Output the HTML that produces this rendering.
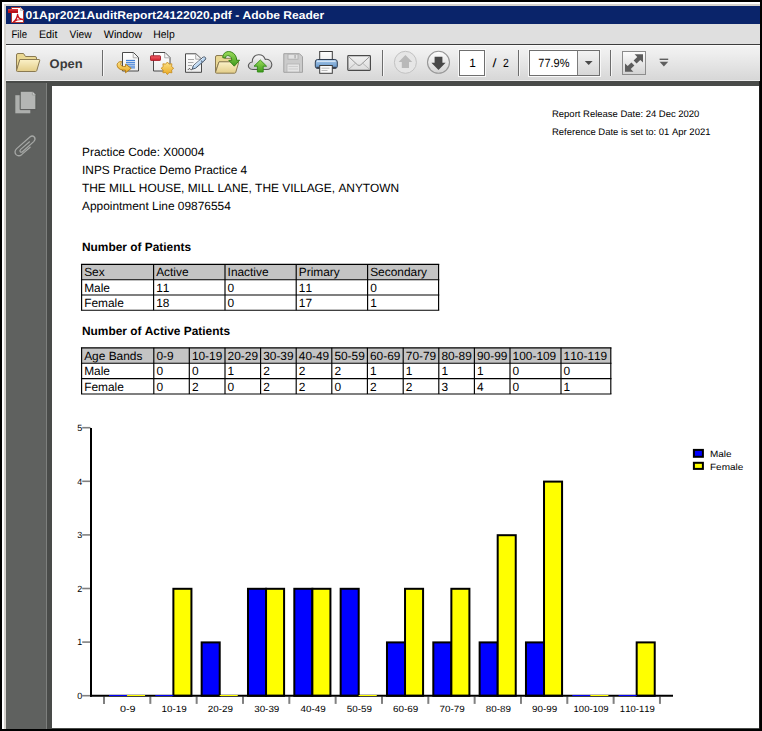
<!DOCTYPE html>
<html>
<head>
<meta charset="utf-8">
<title>01Apr2021AuditReport24122020.pdf - Adobe Reader</title>
<style>
html,body{margin:0;padding:0;}
body{text-rendering:geometricPrecision;font-kerning:none;width:762px;height:731px;background:#000;position:relative;overflow:hidden;font-family:"Liberation Sans",sans-serif;color:#000;}
.abs{position:absolute;}
#frame{left:2px;top:2px;width:758px;height:727px;background:#d6d3ce;}
#frame-hi{left:2px;top:2px;width:758px;height:2px;background:#fff;}
#frame-hil{left:2px;top:2px;width:2px;height:727px;background:#fff;}
#title{left:6px;top:6px;width:754px;height:18px;background:#0a246a;}
#title span{position:absolute;left:20px;top:2px;font-size:11px;line-height:14px;font-weight:bold;color:#fff;white-space:nowrap;letter-spacing:0.56px;}
#menu{left:6px;top:24px;width:754px;height:20px;background:#dfdfdf;}
#tb{left:6px;top:44px;width:754px;height:37px;background:linear-gradient(#f4f4f4 0,#eeeeee 25%,#e3e3e3 60%,#d6d6d6 100%);}
#tb-top{left:6px;top:44px;width:754px;height:1px;background:#3c3c3c;}
#tb-hi{left:6px;top:45px;width:754px;height:1px;background:#fbfbfb;}
#tb-lo{left:6px;top:80px;width:754px;height:1px;background:#ececec;}
#edge-r{left:759px;top:81px;width:1px;height:648px;background:#1c1c1c;}
#doc{left:6px;top:81px;width:754px;height:648px;background:#494b49;}
#side{left:6px;top:83px;width:40px;height:646px;background:#5f615f;}
#side-r{left:46px;top:83px;width:1px;height:646px;background:#7d7f7d;}
#page{left:52px;top:86px;width:707px;height:642px;background:#fff;}
.t{position:absolute;white-space:nowrap;line-height:14px;}
.main{font-size:11.9px;}
.small{font-size:9.47px;}
</style>
</head>
<body>
<div id="frame" class="abs"></div>
<div id="frame-hi" class="abs"></div>
<div id="frame-hil" class="abs"></div>
<div id="title" class="abs"></div>
<div id="menu" class="abs"></div>
<div id="tb" class="abs"></div>
<div id="tb-top" class="abs"></div>
<div id="tb-hi" class="abs"></div>
<div id="tb-lo" class="abs"></div>
<div id="doc" class="abs"></div>
<div id="side" class="abs"></div>
<div id="side-r" class="abs"></div>
<div id="page" class="abs"></div>
<div id="edge-r" class="abs"></div>
<svg class="abs" style="left:6px;top:83px" width="46" height="100" viewBox="6 83 46 100">
<path d="M15.3 95.2 H30.3 V113.3 H15.3 Z" fill="#adafad"/>
<path d="M20.2 91.2 H32.8 L35.9 94.3 V109.6 H20.2 Z" fill="#b4b6b4" stroke="#555755" stroke-width="1" stroke-linejoin="round"/>
<path d="M32.4 91.9 V94.9 H35.4" fill="#d2d4d2" stroke="#8a8c8a" stroke-width="0.7"/>
<g fill="none" stroke="#a6a8a6" stroke-width="1.25" stroke-linecap="round" stroke-linejoin="round" transform="translate(-0.9,-4.8)">
<path d="M30.4 146.6 L21.6 154.2 Q20.2 155.6 21.2 156.6 Q22.3 157.5 23.6 156.3 L34.6 146.4 Q37 144 35.2 141.8 Q33.2 139.8 30.8 141.8 L17.6 153.4 Q14.6 156.6 17 159.4 Q19.6 161.8 22.8 159.2 L31 152"/>
</g>
</svg>

<!-- PAGE TEXT -->
<div class="t small" style="left:552px;top:108px">Report Release Date: 24 Dec 2020</div>
<div class="t small" style="left:552px;top:126px">Reference Date is set to: 01 Apr 2021</div>
<div class="t main" style="left:82px;top:145px">Practice Code: X00004</div>
<div class="t main" style="left:82px;top:163px">INPS Practice Demo Practice 4</div>
<div class="t main" style="left:82px;top:181px">THE MILL HOUSE, MILL LANE, THE VILLAGE, ANYTOWN</div>
<div class="t main" style="left:82px;top:199px">Appointment Line 09876554</div>
<div class="t main" style="left:82px;top:240px;font-weight:bold">Number of Patients</div>
<div class="t main" style="left:82px;top:324px;font-weight:bold">Number of Active Patients</div>
<svg class="abs" style="left:0;top:0" width="762" height="731" viewBox="0 0 762 731"><g stroke="#000" stroke-width="1.15" fill="none"><rect stroke="none" x="81.6" y="264.4" width="357" height="15.3" fill="#c4c4c4"/><rect stroke="none" x="81.6" y="347.8" width="529.2" height="15.4" fill="#c4c4c4"/><line x1="80.95" y1="264.4" x2="439.25" y2="264.4"/><line x1="80.95" y1="279.7" x2="439.25" y2="279.7"/><line x1="80.95" y1="295" x2="439.25" y2="295"/><line x1="80.95" y1="310.2" x2="439.25" y2="310.2"/><line x1="81.6" y1="264.4" x2="81.6" y2="310.2"/><line x1="153.6" y1="264.4" x2="153.6" y2="310.2"/><line x1="225" y1="264.4" x2="225" y2="310.2"/><line x1="296.2" y1="264.4" x2="296.2" y2="310.2"/><line x1="367.6" y1="264.4" x2="367.6" y2="310.2"/><line x1="438.6" y1="264.4" x2="438.6" y2="310.2"/><line x1="80.95" y1="347.8" x2="611.45" y2="347.8"/><line x1="80.95" y1="363.2" x2="611.45" y2="363.2"/><line x1="80.95" y1="378.6" x2="611.45" y2="378.6"/><line x1="80.95" y1="394" x2="611.45" y2="394"/><line x1="81.6" y1="347.8" x2="81.6" y2="394"/><line x1="153.8" y1="347.8" x2="153.8" y2="394"/><line x1="189.3" y1="347.8" x2="189.3" y2="394"/><line x1="225" y1="347.8" x2="225" y2="394"/><line x1="260.6" y1="347.8" x2="260.6" y2="394"/><line x1="296.2" y1="347.8" x2="296.2" y2="394"/><line x1="331.8" y1="347.8" x2="331.8" y2="394"/><line x1="367.4" y1="347.8" x2="367.4" y2="394"/><line x1="403.2" y1="347.8" x2="403.2" y2="394"/><line x1="438.8" y1="347.8" x2="438.8" y2="394"/><line x1="474.4" y1="347.8" x2="474.4" y2="394"/><line x1="510" y1="347.8" x2="510" y2="394"/><line x1="561" y1="347.8" x2="561" y2="394"/><line x1="610.8" y1="347.8" x2="610.8" y2="394"/></g><g font-family="'Liberation Sans',sans-serif" font-size="11.9" fill="#000"><text x="84.2" y="276.3">Sex</text><text x="156.2" y="276.3">Active</text><text x="227.6" y="276.3">Inactive</text><text x="298.8" y="276.3">Primary</text><text x="370.2" y="276.3">Secondary</text><text x="84.2" y="291.6">Male</text><text x="156.2" y="291.6">11</text><text x="227.6" y="291.6">0</text><text x="298.8" y="291.6">11</text><text x="370.2" y="291.6">0</text><text x="84.2" y="306.9">Female</text><text x="156.2" y="306.9">18</text><text x="227.6" y="306.9">0</text><text x="298.8" y="306.9">17</text><text x="370.2" y="306.9">1</text><text x="84.2" y="359.7">Age Bands</text><text x="156.4" y="359.7">0-9</text><text x="191.9" y="359.7">10-19</text><text x="227.6" y="359.7">20-29</text><text x="263.2" y="359.7">30-39</text><text x="298.8" y="359.7">40-49</text><text x="334.4" y="359.7">50-59</text><text x="370" y="359.7">60-69</text><text x="405.8" y="359.7">70-79</text><text x="441.4" y="359.7">80-89</text><text x="477" y="359.7">90-99</text><text x="512.6" y="359.7">100-109</text><text x="563.6" y="359.7">110-119</text><text x="84.2" y="375.1">Male</text><text x="156.4" y="375.1">0</text><text x="191.9" y="375.1">0</text><text x="227.6" y="375.1">1</text><text x="263.2" y="375.1">2</text><text x="298.8" y="375.1">2</text><text x="334.4" y="375.1">2</text><text x="370" y="375.1">1</text><text x="405.8" y="375.1">1</text><text x="441.4" y="375.1">1</text><text x="477" y="375.1">1</text><text x="512.6" y="375.1">0</text><text x="563.6" y="375.1">0</text><text x="84.2" y="390.5">Female</text><text x="156.4" y="390.5">0</text><text x="191.9" y="390.5">2</text><text x="227.6" y="390.5">0</text><text x="263.2" y="390.5">2</text><text x="298.8" y="390.5">2</text><text x="334.4" y="390.5">0</text><text x="370" y="390.5">2</text><text x="405.8" y="390.5">2</text><text x="441.4" y="390.5">3</text><text x="477" y="390.5">4</text><text x="512.6" y="390.5">0</text><text x="563.6" y="390.5">1</text></g></svg>
<svg class="abs" style="left:0;top:0" width="762" height="731" viewBox="0 0 762 731"><g stroke="#808080" stroke-width="1.6"><line x1="82.2" y1="695.7" x2="90.5" y2="695.7"/><line x1="82.2" y1="642.1" x2="90.5" y2="642.1"/><line x1="82.2" y1="588.5" x2="90.5" y2="588.5"/><line x1="82.2" y1="534.9" x2="90.5" y2="534.9"/><line x1="82.2" y1="481.3" x2="90.5" y2="481.3"/><line x1="82.2" y1="427.7" x2="90.5" y2="427.7"/></g><g stroke="#808080" stroke-width="2"><line x1="104" y1="696.5" x2="104" y2="703.9"/><line x1="150.33" y1="696.5" x2="150.33" y2="703.9"/><line x1="196.66" y1="696.5" x2="196.66" y2="703.9"/><line x1="242.99" y1="696.5" x2="242.99" y2="703.9"/><line x1="289.32" y1="696.5" x2="289.32" y2="703.9"/><line x1="335.65" y1="696.5" x2="335.65" y2="703.9"/><line x1="381.98" y1="696.5" x2="381.98" y2="703.9"/><line x1="428.31" y1="696.5" x2="428.31" y2="703.9"/><line x1="474.64" y1="696.5" x2="474.64" y2="703.9"/><line x1="520.97" y1="696.5" x2="520.97" y2="703.9"/><line x1="567.3" y1="696.5" x2="567.3" y2="703.9"/><line x1="613.63" y1="696.5" x2="613.63" y2="703.9"/><line x1="659.96" y1="696.5" x2="659.96" y2="703.9"/></g><g stroke="#000" stroke-width="2"><rect x="173.38" y="588.8" width="18.05" height="107" fill="#ffff00"/><rect x="201.66" y="642.4" width="18.05" height="53.4" fill="#0000ff"/><rect x="247.99" y="588.8" width="18.05" height="107" fill="#0000ff"/><rect x="266.04" y="588.8" width="18.05" height="107" fill="#ffff00"/><rect x="294.32" y="588.8" width="18.05" height="107" fill="#0000ff"/><rect x="312.37" y="588.8" width="18.05" height="107" fill="#ffff00"/><rect x="340.65" y="588.8" width="18.05" height="107" fill="#0000ff"/><rect x="386.98" y="642.4" width="18.05" height="53.4" fill="#0000ff"/><rect x="405.03" y="588.8" width="18.05" height="107" fill="#ffff00"/><rect x="433.31" y="642.4" width="18.05" height="53.4" fill="#0000ff"/><rect x="451.36" y="588.8" width="18.05" height="107" fill="#ffff00"/><rect x="479.64" y="642.4" width="18.05" height="53.4" fill="#0000ff"/><rect x="497.69" y="535.2" width="18.05" height="160.6" fill="#ffff00"/><rect x="525.97" y="642.4" width="18.05" height="53.4" fill="#0000ff"/><rect x="544.02" y="481.6" width="18.05" height="214.2" fill="#ffff00"/><rect x="636.68" y="642.4" width="18.05" height="53.4" fill="#ffff00"/></g><line x1="91" y1="427.9" x2="91" y2="696.8" stroke="#000" stroke-width="2"/><line x1="90" y1="695.8" x2="673" y2="695.8" stroke="#000" stroke-width="2"/><line x1="109" y1="695.5" x2="127.05" y2="695.5" stroke="#0000ff" stroke-width="1"/><line x1="127.05" y1="695.5" x2="145.1" y2="695.5" stroke="#ffff00" stroke-width="1"/><line x1="155.33" y1="695.5" x2="173.38" y2="695.5" stroke="#0000ff" stroke-width="1"/><line x1="219.71" y1="695.5" x2="237.76" y2="695.5" stroke="#ffff00" stroke-width="1"/><line x1="358.7" y1="695.5" x2="376.75" y2="695.5" stroke="#ffff00" stroke-width="1"/><line x1="572.3" y1="695.5" x2="590.35" y2="695.5" stroke="#0000ff" stroke-width="1"/><line x1="590.35" y1="695.5" x2="608.4" y2="695.5" stroke="#ffff00" stroke-width="1"/><line x1="618.63" y1="695.5" x2="636.68" y2="695.5" stroke="#0000ff" stroke-width="1"/><g font-family="'Liberation Sans',sans-serif" font-size="9" fill="#000"><text x="77.3" y="698.9" textLength="5" lengthAdjust="spacingAndGlyphs">0</text><text x="77.3" y="645.3" textLength="5" lengthAdjust="spacingAndGlyphs">1</text><text x="77.3" y="591.7" textLength="5" lengthAdjust="spacingAndGlyphs">2</text><text x="77.3" y="538.1" textLength="5" lengthAdjust="spacingAndGlyphs">3</text><text x="77.3" y="484.5" textLength="5" lengthAdjust="spacingAndGlyphs">4</text><text x="77.3" y="430.9" textLength="5" lengthAdjust="spacingAndGlyphs">5</text><text x="119.96" y="711.7" textLength="15.6" lengthAdjust="spacingAndGlyphs">0-9</text><text x="161.5" y="711.7" textLength="25.2" lengthAdjust="spacingAndGlyphs">10-19</text><text x="207.82" y="711.7" textLength="25.2" lengthAdjust="spacingAndGlyphs">20-29</text><text x="254.16" y="711.7" textLength="25.2" lengthAdjust="spacingAndGlyphs">30-39</text><text x="300.49" y="711.7" textLength="25.2" lengthAdjust="spacingAndGlyphs">40-49</text><text x="346.81" y="711.7" textLength="25.2" lengthAdjust="spacingAndGlyphs">50-59</text><text x="393.14" y="711.7" textLength="25.2" lengthAdjust="spacingAndGlyphs">60-69</text><text x="439.47" y="711.7" textLength="25.2" lengthAdjust="spacingAndGlyphs">70-79</text><text x="485.81" y="711.7" textLength="25.2" lengthAdjust="spacingAndGlyphs">80-89</text><text x="532.13" y="711.7" textLength="25.2" lengthAdjust="spacingAndGlyphs">90-99</text><text x="573.56" y="711.7" textLength="35" lengthAdjust="spacingAndGlyphs">100-109</text><text x="619.89" y="711.7" textLength="35" lengthAdjust="spacingAndGlyphs">110-119</text><text x="710" y="456.9" textLength="21.6" lengthAdjust="spacingAndGlyphs">Male</text><text x="710" y="469.8" textLength="33.3" lengthAdjust="spacingAndGlyphs">Female</text></g><rect x="693.9" y="449.9" width="9" height="6.9" fill="#0000ff" stroke="#000" stroke-width="2"/><rect x="693.9" y="462.8" width="9" height="6.1" fill="#ffff00" stroke="#000" stroke-width="2"/></svg>
<svg class="abs" style="left:0;top:0" width="762" height="100" viewBox="0 0 762 100">
<defs>
<linearGradient id="gFold" x1="0" y1="0" x2="0" y2="1"><stop offset="0" stop-color="#fbf1c8"/><stop offset="1" stop-color="#e3cd88"/></linearGradient>
<linearGradient id="gPage" x1="0" y1="0" x2="0" y2="1"><stop offset="0" stop-color="#ffffff"/><stop offset="1" stop-color="#ececec"/></linearGradient>
<linearGradient id="gGold" x1="0" y1="0" x2="0" y2="1"><stop offset="0" stop-color="#fde38a"/><stop offset="1" stop-color="#e9a820"/></linearGradient>
<linearGradient id="gRed" x1="0" y1="0" x2="0" y2="1"><stop offset="0" stop-color="#f0616a"/><stop offset="1" stop-color="#d4222f"/></linearGradient>
<linearGradient id="gGreen" x1="0" y1="0" x2="0" y2="1"><stop offset="0" stop-color="#9bdc5a"/><stop offset="1" stop-color="#3f9a1c"/></linearGradient>
<linearGradient id="gCloud" x1="0" y1="0" x2="0" y2="1"><stop offset="0" stop-color="#fafafa"/><stop offset="1" stop-color="#c4c4c4"/></linearGradient>
<linearGradient id="gBlue" x1="0" y1="0" x2="0" y2="1"><stop offset="0" stop-color="#a9c9ea"/><stop offset="1" stop-color="#5f93c9"/></linearGradient>
<linearGradient id="gBtn" x1="0" y1="0" x2="0" y2="1"><stop offset="0" stop-color="#fdfdfd"/><stop offset="1" stop-color="#d2d2d2"/></linearGradient>
<linearGradient id="gBtnD" x1="0" y1="0" x2="0" y2="1"><stop offset="0" stop-color="#f2f2f2"/><stop offset="1" stop-color="#dcdcdc"/></linearGradient>
<linearGradient id="gDrop" x1="0" y1="0" x2="0" y2="1"><stop offset="0" stop-color="#f3f3f3"/><stop offset="1" stop-color="#d6d6d6"/></linearGradient>
</defs>
<!-- MENU -->
<g font-family="'Liberation Sans',sans-serif" font-size="11" fill="#000">
<text x="11.5" y="37.6" textLength="15.5" lengthAdjust="spacingAndGlyphs">File</text>
<text x="39" y="37.6" textLength="18.4" lengthAdjust="spacingAndGlyphs">Edit</text>
<text x="69.5" y="37.6" textLength="22.2" lengthAdjust="spacingAndGlyphs">View</text>
<text x="103.8" y="37.6" textLength="38.3" lengthAdjust="spacingAndGlyphs">Window</text>
<text x="153.3" y="37.6" textLength="21.4" lengthAdjust="spacingAndGlyphs">Help</text>
</g>
<text x="25.6" y="18.9" font-family="'Liberation Sans',sans-serif" font-size="11.4" font-weight="bold" fill="#fff" textLength="298.6" lengthAdjust="spacingAndGlyphs">01Apr2021AuditReport24122020.pdf - Adobe Reader</text>
<!-- TITLE ICON -->
<g>
<path d="M11.5 7.5 H20.5 L23.5 10.5 V22.5 H11.5 Z" fill="#fff" stroke="#b5332b" stroke-width="1"/>
<path d="M20.5 7.5 V10.5 H23.5" fill="#e6e6e6" stroke="#bdbdbd" stroke-width="0.8"/>
<rect x="8" y="9" width="10" height="4" fill="#b8121b"/>
<rect x="8" y="9" width="10" height="1.6" fill="#d8323a"/>
<path d="M13.4 22 C15.6 20.4 17.3 17.8 17.6 14.4 C17.8 17.2 19.6 19.2 22.8 19.5 C19.4 19.2 16 20 13.4 22 Z" fill="#fff" stroke="#c9121b" stroke-width="1.3" stroke-linejoin="round"/>
</g>
<!-- SEPARATORS -->
<g stroke="#6c6c6c" stroke-width="1">
<line x1="102.5" y1="50" x2="102.5" y2="76"/>
<line x1="382.5" y1="50" x2="382.5" y2="76"/>
<line x1="518.5" y1="50" x2="518.5" y2="76"/>
<line x1="610.5" y1="50" x2="610.5" y2="76"/>
</g>
<g stroke="#f6f6f6" stroke-width="1">
<line x1="103.5" y1="50" x2="103.5" y2="76"/>
<line x1="383.5" y1="50" x2="383.5" y2="76"/>
<line x1="519.5" y1="50" x2="519.5" y2="76"/>
<line x1="611.5" y1="50" x2="611.5" y2="76"/>
</g>
<!-- OPEN -->
<g stroke="#8a7a52" stroke-width="1" stroke-linejoin="round">
<path d="M16.5 70.5 V55 Q16.5 53.5 18 53.5 H23.5 L25.5 56.5 H35 Q36.5 56.5 36.5 58 V60 H20 Z" fill="#ead893"/>
<path d="M19.8 59.5 H39 Q40 59.5 39.7 60.6 L36.8 70.5 Q36.5 71.5 35.5 71.5 H17.5 Q16.3 71.5 16.6 70.3 Z" fill="url(#gFold)"/>
</g>
<text x="49.6" y="67.7" font-family="'Liberation Sans',sans-serif" font-size="12.5" font-weight="bold" fill="#3a3a3a" textLength="33" lengthAdjust="spacingAndGlyphs">Open</text>
<!-- ICON 1: export page with arrow -->
<g>
<path d="M122.5 52.5 H133.5 L138.5 57.5 V71 H122.5 Z" fill="url(#gPage)" stroke="#4a4a4a" stroke-width="1" stroke-linejoin="round"/>
<path d="M133.2 53 V57.8 H138" fill="#f4f4f4" stroke="#9a9a9a" stroke-width="0.8"/>
<g stroke="#2a72d6" stroke-width="1"><line x1="126" y1="60.4" x2="135" y2="60.4"/><line x1="126" y1="62.3" x2="135" y2="62.3"/><line x1="126" y1="64.2" x2="135" y2="64.2"/><line x1="126" y1="66.1" x2="135" y2="66.1"/><line x1="129" y1="67.9" x2="135" y2="67.9"/></g>
<path d="M121.5 61.5 C118 61.5 116.6 64 117.3 66.2 C118.2 69.2 121.5 70.3 125.5 70.2 L125.5 72.8 L131.2 68.3 L125.5 64.2 L125.5 66.6 C123 66.7 121 66 120.8 64.5 C120.7 63.4 121.3 62.6 121.5 61.5 Z" fill="url(#gGold)" stroke="#b27b12" stroke-width="0.9" stroke-linejoin="round"/>
</g>
<!-- ICON 2: create pdf -->
<g>
<path d="M153.5 52.5 H165 L170 57.5 V71 H153.5 Z" fill="url(#gPage)" stroke="#4a4a4a" stroke-width="1" stroke-linejoin="round"/>
<path d="M164.7 53 V57.8 H169.5" fill="#f4f4f4" stroke="#9a9a9a" stroke-width="0.8"/>
<rect x="150.5" y="55.8" width="10" height="4.6" rx="0.6" fill="url(#gRed)" stroke="#a51a26" stroke-width="0.9"/>
<path d="M167.4 62.0 L169.1 64.1 L171.9 63.8 L171.6 66.6 L173.7 68.3 L171.6 70.0 L171.9 72.8 L169.1 72.5 L167.4 74.6 L165.7 72.5 L162.9 72.8 L163.2 70.0 L161.1 68.3 L163.2 66.6 L162.9 63.8 L165.7 64.1 Z" fill="url(#gGold)" stroke="#c58a1a" stroke-width="0.8" stroke-linejoin="round"/>
</g>
<!-- ICON 3: sign -->
<g>
<path d="M185.5 53.8 H196 L201.5 59 V72.3 H185.5 Z" fill="url(#gPage)" stroke="#4a4a4a" stroke-width="1" stroke-linejoin="round"/>
<path d="M195.7 54.2 V59.2 H201" fill="#f4f4f4" stroke="#9a9a9a" stroke-width="0.8"/>
<g stroke="#a8a8a8" stroke-width="1"><line x1="188" y1="59.5" x2="194" y2="59.5"/><line x1="188" y1="62.5" x2="193.5" y2="62.5"/><line x1="188" y1="65.5" x2="192" y2="65.5"/></g>
<path d="M188 69.8 C189 68.4 190 68.2 190.4 69.2 C190.8 70 191.6 69.8 192.4 69" fill="none" stroke="#3a3a3a" stroke-width="0.9"/>
<path d="M192.3 69.2 L193.2 65.8 L203 57.2 Q204.6 56.4 205.5 57.6 Q206.2 58.8 205 60 L195.6 68.2 Z" fill="#b9d6f2" stroke="#3b4a5c" stroke-width="0.9" stroke-linejoin="round"/>
<path d="M200.2 59.7 L202.6 62.3" stroke="#3b4a5c" stroke-width="0.9"/>
<path d="M194 66 L203.4 57.8" stroke="#e9f3fc" stroke-width="0.9"/>
</g>
<!-- ICON 4: folder with green arrow -->
<g stroke="#8a7a52" stroke-width="1" stroke-linejoin="round">
<path d="M215.5 72 V57 Q215.5 55.5 217 55.5 H222.5 L224.5 58.3 H235 Q236.5 58.3 236.5 59.8 V62 H219 Z" fill="#ead893"/>
<path d="M219 61.8 H237.8 Q238.8 61.8 238.5 62.9 L235.8 72.2 Q235.5 73.2 234.5 73.2 H216.5 Q215.3 73.2 215.6 72 Z" fill="url(#gFold)"/>
</g>
<path d="M222.8 57.8 C222.6 52.5 227.5 50.6 231.2 52 C235 53.4 236.6 56.8 236.8 60.3 L239.6 60.2 L234.3 66.2 L228.8 60.4 L231.8 60.3 C231.7 58.2 230.8 56.3 229 55.8 C227 55.2 225.4 56.2 225.6 57.9 Z" fill="url(#gGreen)" stroke="#2e7a12" stroke-width="0.9" stroke-linejoin="round"/>
<!-- ICON 5: cloud upload -->
<g>
<path d="M253 69.5 C249.2 69.5 247.6 66.6 248.8 64.2 C249.6 62.6 251 62 252.3 62 C252 58.4 254.4 55 258.4 54.8 C261.6 54.6 264.2 56.4 265.2 59.4 C268.6 58.8 271.6 61 271.8 64.4 C272 67.4 269.8 69.5 267 69.5 Z" fill="url(#gCloud)" stroke="#5a5a5a" stroke-width="1.1" stroke-linejoin="round"/>
<path d="M260.3 60 L266.6 66.2 H263.2 V72 H257.4 V66.2 H254 Z" fill="url(#gGreen)" stroke="#2e8a14" stroke-width="0.9" stroke-linejoin="round"/>
</g>
<!-- ICON 6: floppy disabled -->
<g>
<path d="M283.8 53.7 H299.5 L302.5 56.7 V72.3 H283.8 Z" fill="#cbcbcb" stroke="#a2a2a2" stroke-width="1" stroke-linejoin="round"/>
<rect x="288" y="54.2" width="10" height="5" fill="#e2e2e2" stroke="#ababab" stroke-width="0.8"/>
<rect x="294.3" y="55" width="1.6" height="3.4" fill="#b5b5b5"/>
<rect x="287" y="64" width="12.6" height="8" fill="#e4e4e4" stroke="#b2b2b2" stroke-width="0.8"/>
<g stroke="#c9c9c9" stroke-width="0.9"><line x1="288.5" y1="66.5" x2="298" y2="66.5"/><line x1="288.5" y1="69" x2="298" y2="69"/></g>
</g>
<!-- ICON 7: printer -->
<g>
<rect x="319.7" y="51.5" width="12.6" height="9.5" fill="url(#gPage)" stroke="#3c3c3c" stroke-width="1"/>
<path d="M317.5 59.5 H334.8 Q337.3 59.5 337.3 62 V66.2 Q337.3 68.3 335.2 68.3 H317.3 Q315.3 68.3 315.3 66.2 V62 Q315.3 59.5 317.5 59.5 Z" fill="url(#gBlue)" stroke="#2f3e52" stroke-width="1"/>
<path d="M317 61.3 H335.6" stroke="#d9e8f7" stroke-width="1.2"/>
<rect x="316.5" y="66.8" width="19.6" height="1.8" fill="#3a4250"/>
<rect x="319.7" y="65.5" width="12.6" height="7.8" fill="#fafafa" stroke="#3c3c3c" stroke-width="1"/>
<g stroke="#b4b4b4" stroke-width="0.9"><line x1="321.5" y1="68.2" x2="329.5" y2="68.2"/><line x1="321.5" y1="70.5" x2="327.5" y2="70.5"/></g>
</g>
<!-- ICON 8: envelope -->
<g>
<rect x="347.8" y="55.7" width="22.6" height="14.6" rx="0.8" fill="url(#gBtnD)" stroke="#4a4a4a" stroke-width="1.2"/>
<path d="M348.8 56.8 L357.4 64.8 Q359.1 66.2 360.8 64.8 L369.4 56.8" fill="none" stroke="#8e8e8e" stroke-width="0.9"/>
<path d="M348.8 69.2 L355.6 63.2 M369.4 69.2 L362.6 63.2" fill="none" stroke="#ababab" stroke-width="0.8"/>
</g>
<!-- UP (disabled) -->
<g>
<circle cx="405.4" cy="62.3" r="11" fill="#e6e6e6" stroke="#c2c2c2" stroke-width="1"/>
<path d="M405.4 55 L412.2 62 H409 V68 H401.8 V62 H398.6 Z" fill="#b9b9b9"/>
</g>
<!-- DOWN -->
<g>
<circle cx="438.5" cy="62.3" r="11" fill="url(#gBtn)" stroke="#979797" stroke-width="1.1"/>
<path d="M438.5 70 L445.6 62.8 H442.4 V56.8 H434.6 V62.8 H431.4 Z" fill="#474747"/>
</g>
<!-- PAGE BOX -->
<rect x="458.5" y="49.5" width="27" height="27" fill="none" stroke="#f8f8f8" stroke-width="1"/>
<rect x="459.5" y="50.5" width="25" height="25" fill="#fff" stroke="#6f6f6f" stroke-width="1"/>
<g font-family="'Liberation Sans',sans-serif" font-size="12" fill="#000">
<text x="469.2" y="66.8" textLength="6.6" lengthAdjust="spacingAndGlyphs">1</text>
<text x="492.6" y="66.8" textLength="4" lengthAdjust="spacingAndGlyphs">/</text>
<text x="503" y="66.8" textLength="5.8" lengthAdjust="spacingAndGlyphs">2</text>
</g>
<!-- ZOOM BOX -->
<rect x="528.5" y="49.5" width="72" height="27" fill="none" stroke="#f8f8f8" stroke-width="1"/>
<rect x="577.5" y="50.5" width="22" height="25" fill="url(#gDrop)"/>
<rect x="529.5" y="50.5" width="48" height="25" fill="#fff"/>
<rect x="529.5" y="50.5" width="70" height="25" fill="none" stroke="#6f6f6f" stroke-width="1"/>
<line x1="577.5" y1="50.5" x2="577.5" y2="75.5" stroke="#7c7c7c" stroke-width="1"/>
<path d="M584.8 61.1 H592.6 L588.7 65 Z" fill="#4a4a4a"/>
<text x="538.3" y="66.8" font-family="'Liberation Sans',sans-serif" font-size="12" fill="#000" textLength="31.2" lengthAdjust="spacingAndGlyphs">77.9%</text>
<!-- FULLSCREEN -->
<rect x="622.5" y="51.5" width="23" height="23" fill="url(#gBtn)" stroke="#8c8c8c" stroke-width="1"/>
<g fill="#5c5c5c">
<path d="M634.6 54.2 H643 V62.6 L640.3 59.9 L636.6 63.6 L633.6 60.6 L637.3 56.9 Z"/>
<path d="M633.4 71.8 H625 V63.4 L627.7 66.1 L631.4 62.4 L634.4 65.4 L630.7 69.1 Z"/>
</g>
<!-- MORE -->
<rect x="659.6" y="58.6" width="8.6" height="1.4" fill="#5e5e5e"/>
<path d="M659.6 61.8 H668.2 L663.9 66.4 Z" fill="#5e5e5e"/>

</svg>

</body>
</html>
